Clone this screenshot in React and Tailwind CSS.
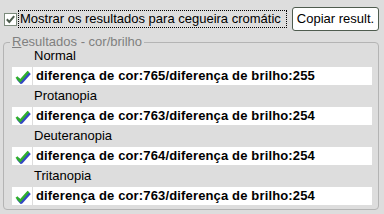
import React from 'react';

const results = [
  { label: 'Normal', text: 'diferença de cor:765/diferença de brilho:255' },
  { label: 'Protanopia', text: 'diferença de cor:763/diferença de brilho:254' },
  { label: 'Deuteranopia', text: 'diferença de cor:764/diferença de brilho:254' },
  { label: 'Tritanopia', text: 'diferença de cor:763/diferença de brilho:254' },
];

const CheckIcon = () => (
  <svg width="17" height="16" viewBox="0 0 17 16">
    <polyline points="2.5,9 6,13 14.5,3.5" fill="none" stroke="#3347c4" strokeWidth="3" strokeLinejoin="round" transform="translate(1.2,1.4)" />
    <polyline points="2.5,9 6,13 14.5,3.5" fill="none" stroke="#2fb02a" strokeWidth="2.6" strokeLinejoin="round" />
  </svg>
);

const App = () => {
  return (
    <div
      className="w-[384px] h-[214px] bg-[#dddddd] text-black text-[13px] overflow-hidden"
      style={{ fontFamily: '"Liberation Sans", Arial, sans-serif' }}
    >
      {/* Top bar: checkbox + button */}
      <div className="flex items-center h-[24px] mt-[7px] pl-[4px]">
        <div className="w-[13px] h-[13px] bg-white border border-[#7c8b7c] flex items-center justify-center">
          <svg width="11" height="11" viewBox="0 0 11 11">
            <polyline points="1.8,5.3 4.3,8 9.2,2.2" fill="none" stroke="#4e5e4e" strokeWidth="2" />
          </svg>
        </div>
        <div className="ml-[1px] h-[18px] w-[269px] border border-dotted border-black leading-[16px] pl-[1px] whitespace-nowrap overflow-hidden">
          Mostrar os resultados para cegueira cromátic
        </div>
        <button className="ml-[5px] w-[87px] h-[24px] bg-white border border-[#4f5c4f] rounded-[3px] leading-[20px] text-center">
          Copiar result.
        </button>
      </div>

      {/* Group box */}
      <div className="relative mt-[11px] ml-[3px] w-[376px] h-[168px] border border-[#b4b4b4] rounded-[4px]">
        <span className="absolute left-[6px] -top-[9px] px-[2px] bg-[#dddddd] text-[#808080] leading-[15px]">
          <span className="underline">R</span>esultados - cor/brilho
        </span>
        <div className="flex flex-col pt-[3px]">
          {results.map((r) => (
            <div key={r.label} className="flex flex-col">
              <div className="h-[20px] leading-[20px] pl-[30px]">{r.label}</div>
              <div className="h-[20px] flex items-center pl-[8px]">
                <div className="w-[20px] h-[18px] bg-white flex items-center justify-center">
                  <CheckIcon />
                </div>
                <div className="ml-[1px] w-[339px] h-[18px] bg-white font-bold tracking-[0.15px] leading-[18px] pl-[3px] whitespace-nowrap">
                  {r.text}
                </div>
              </div>
            </div>
          ))}
        </div>
      </div>
    </div>
  );
};

export default App;
